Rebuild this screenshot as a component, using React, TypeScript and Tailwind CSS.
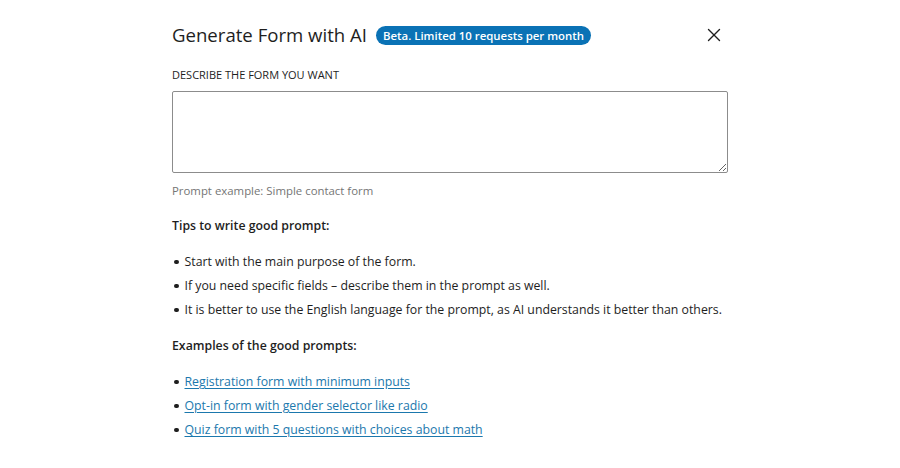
import { X } from 'lucide-react';

const tips = [
  'Start with the main purpose of the form.',
  'If you need specific fields – describe them in the prompt as well.',
  'It is better to use the English language for the prompt, as AI understands it better than others.',
];

const examples = [
  'Registration form with minimum inputs',
  'Opt-in form with gender selector like radio',
  'Quiz form with 5 questions with choices about math',
];

function Bullet() {
  return <span className="ml-[1px] mr-[6px] h-[4.5px] w-[4.5px] shrink-0 rounded-full bg-[#1e1e1e]" />;
}

export default function App() {
  return (
    <div
      className="h-[468px] w-[900px] bg-white text-[#1e1e1e]"
      style={{ fontFamily: '"Open Sans", "Noto Sans", sans-serif' }}
    >
      <div className="mx-auto w-[556px] pt-[22px]">
        {/* Header */}
        <div className="flex h-[26px] items-center justify-between">
          <div className="flex items-center gap-[9px]">
            <h1 className="text-[18.6px] leading-[26px] text-[#1e1e1e]">Generate Form with AI</h1>
            <span className="rounded-full bg-[#0a72b5] px-[7px] text-[11.4px] font-semibold leading-[19px] text-white">
              Beta. Limited 10 requests per month
            </span>
          </div>
          <button className="mr-[2px] flex h-[24px] w-[24px] items-center justify-center text-[#1e1e1e]">
            <X size={22} strokeWidth={1.5} />
          </button>
        </div>

        {/* Prompt field */}
        <label className="mt-[20px] block text-[11px] uppercase leading-[14px] text-[#1e1e1e]">
          Describe the form you want
        </label>
        <textarea className="mt-[9px] block h-[82px] w-[556px] resize-y rounded-[2px] border border-[#8c8c8c] bg-white px-2 py-1.5 text-[13px] outline-none" />
        <p className="mt-[10px] text-[11.4px] leading-[16px] text-[#757575]">Prompt example: Simple contact form</p>

        {/* Tips */}
        <p className="mt-[19px] text-[12.3px] font-semibold leading-[16px] text-[#1e1e1e]">Tips to write good prompt:</p>
        <ul className="mt-[20px] flex flex-col gap-[8px] pl-[1px]">
          {tips.map((t) => (
            <li key={t} className="flex items-center whitespace-nowrap text-[12.3px] leading-[16px] text-[#1e1e1e]">
              <Bullet />
              {t}
            </li>
          ))}
        </ul>

        {/* Examples */}
        <p className="mt-[20px] text-[12.3px] font-semibold leading-[16px] text-[#1e1e1e]">Examples of the good prompts:</p>
        <ul className="mt-[20px] flex flex-col gap-[8px] pl-[1px]">
          {examples.map((e) => (
            <li key={e} className="flex items-center text-[12.3px] leading-[16px]">
              <Bullet />
              <a href="#" className="text-[#1b78ad] underline underline-offset-2">
                {e}
              </a>
            </li>
          ))}
        </ul>
      </div>
    </div>
  );
}
